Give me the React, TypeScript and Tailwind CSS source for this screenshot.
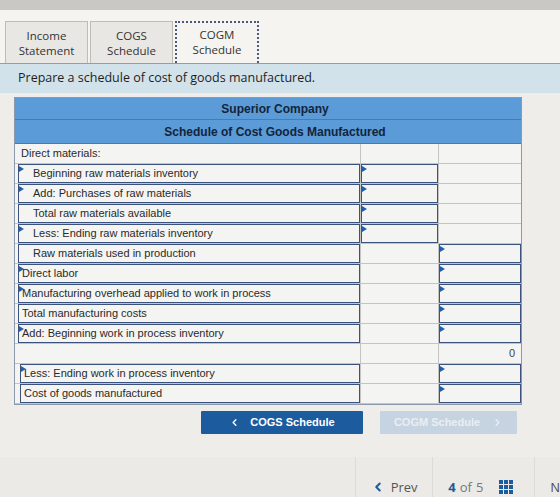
import React from "react";
import { ChevronLeft, ChevronRight } from "lucide-react";

type Row = {
  label: string;
  indent?: boolean;
  labelInput?: boolean;
  marker?: boolean;
  col2?: boolean;
  col3?: boolean;
  value?: string;
  shift?: boolean;
};

const rows: Row[] = [
  { label: "Direct materials:" },
  { label: "Beginning raw materials inventory", indent: true, labelInput: true, marker: true, col2: true },
  { label: "Add: Purchases of raw materials", indent: true, labelInput: true, marker: true, col2: true },
  { label: "Total raw materials available", indent: true, labelInput: true, col2: true },
  { label: "Less: Ending raw materials inventory", indent: true, labelInput: true, marker: true, col2: true },
  { label: "Raw materials used in production", indent: true, labelInput: true, col3: true },
  { label: "Direct labor", labelInput: true, marker: true, col3: true },
  { label: "Manufacturing overhead applied to work in process", labelInput: true, marker: true, col3: true },
  { label: "Total manufacturing costs", labelInput: true, col3: true },
  { label: "Add: Beginning work in process inventory", labelInput: true, marker: true, col3: true },
  { label: "", value: "0" },
  { label: "Less: Ending work in process inventory", labelInput: true, marker: true, col3: true, shift: true },
  { label: "Cost of goods manufactured", labelInput: true, col3: true, shift: true },
];

// small flag marking an editable cell
function Marker() {
  return (
    <span className="absolute left-0 top-[1px] h-0 w-0 border-y-[3px] border-l-[5px] border-y-transparent border-l-[#1f5fb0]" />
  );
}

function InputBox({ marker, children }: { marker?: boolean; children?: React.ReactNode }) {
  return (
    <div className="relative h-full w-full border-[1.5px] border-[#3a527c] bg-[#f4f4f2]">
      {marker && <Marker />}
      {children}
    </div>
  );
}

function TableRow({ row }: { row: Row }) {
  const pad = row.indent ? "pl-[14px]" : "pl-[3px]";
  return (
    <div className="grid h-5 grid-cols-[346px_78px_82px] border-b border-[#c4c4c2]">
      <div className={`h-full border-r border-[#c4c4c2] ${row.shift ? "pl-[5px]" : "pl-[3px]"}`}>
        {row.labelInput ? (
          <InputBox marker={row.marker}>
            <div className={`flex h-full items-center ${pad} text-[11px] text-[#2a2a2a]`}>{row.label}</div>
          </InputBox>
        ) : (
          <div className="flex h-full items-center pl-[3px] text-[11px] text-[#2a2a2a]">{row.label}</div>
        )}
      </div>
      <div className="h-full border-r border-[#c4c4c2]">
        {row.col2 && <InputBox marker />}
      </div>
      <div className="h-full">
        {row.col3 && <InputBox marker />}
        {row.value && (
          <div className="flex h-full items-center justify-end pr-[6px] text-[11px] text-[#444]">{row.value}</div>
        )}
      </div>
    </div>
  );
}

function Tab({ top, bottom, active }: { top: string; bottom: string; active?: boolean }) {
  return (
    <div
      className={
        active
          ? "flex h-[42px] w-[84px] flex-col items-center justify-center border-2 border-dotted border-b-0 border-[#4a5a7a] bg-[#f5f4f0] pb-[3px] text-[11.5px] leading-[15px] text-[#333]"
          : "flex h-[42px] w-[83px] flex-col items-center justify-center border border-b-0 border-[#bcbcb9] bg-[#e8e7e3] text-[11.5px] leading-[15px] text-[#333]"
      }
    >
      <span className="block leading-[15px]">{top}</span>
      <span className="block leading-[15px]">{bottom}</span>
    </div>
  );
}

export default function App() {
  return (
    <div
      className="flex h-[497px] w-[560px] flex-col overflow-hidden bg-[#eeede9]"
      style={{ fontFamily: '"Liberation Sans", Arial, sans-serif' }}
    >
      <div className="h-[10px] bg-[#c9c8c4]" />
      <div className="flex h-[53px] items-end gap-[2px] bg-[#f5f4f0] pl-[5px]" style={{ fontFamily: '"Open Sans", sans-serif' }}>
        <Tab top="Income" bottom="Statement" />
        <Tab top="COGS" bottom="Schedule" />
        <Tab top="COGM" bottom="Schedule" active />
      </div>
      <div
        className="flex h-[30px] items-center border-t border-[#9c9c9a] bg-[#d2e2eb] pl-[18px] text-[12.5px] text-[#1e1e1e]"
        style={{ fontFamily: '"Open Sans", sans-serif' }}
      >
        Prepare a schedule of cost of goods manufactured.
      </div>

      <div className="ml-[14px] mt-[4px] w-[508px] border border-[#8a9aaa] bg-[#f4f4f2]">
        <div className="flex h-[22px] items-center justify-center border-b border-[#4a7ab0] bg-[#5b9bd7] pl-[14px] text-[12px] font-bold text-[#14243a]">
          Superior Company
        </div>
        <div className="flex h-[24px] items-center justify-center border-b border-[#4a7ab0] bg-[#5b9bd7] pl-[14px] text-[12px] font-bold text-[#14243a]">
          Schedule of Cost Goods Manufactured
        </div>
        {rows.map((r, i) => (
          <TableRow key={i} row={r} />
        ))}
      </div>

      <div className="mt-[6px] flex gap-[17px] pl-[201px]">
        <button className="flex h-[23px] w-[162px] items-center justify-center gap-[10px] rounded-[1px] bg-[#1c5c9e] text-[11px] font-bold text-white">
          <ChevronLeft size={11} strokeWidth={3} />
          <span>COGS Schedule</span>
        </button>
        <button className="flex h-[23px] w-[137px] items-center justify-center gap-[12px] rounded-[1px] bg-[#c6d4e2] text-[11px] font-bold text-[#e9eef4]">
          <span>COGM Schedule</span>
          <ChevronRight size={11} strokeWidth={3} />
        </button>
      </div>

      <div className="mt-auto flex h-[40px] bg-[#eceae6]">
        <div className="w-[358px]" />
        <div className="flex w-[78px] items-end justify-center gap-[6px] border-l border-[#dcdbd6] text-[13px] text-[#555]" style={{ fontFamily: '"Open Sans", sans-serif' }}>
          <ChevronLeft size={14} strokeWidth={3.5} className="mb-[3px] text-[#1c5c9e]" />
          <span>Prev</span>
        </div>
        <div className="flex w-[102px] items-end gap-[4px] border-l border-[#dcdbd6] pl-[15px] text-[13px] text-[#777]" style={{ fontFamily: '"Open Sans", sans-serif' }}>
          <span className="font-bold text-[#1c5c9e]">4</span>
          <span>of</span>
          <span>5</span>
          <span className="mb-[3px] ml-[12px] grid grid-cols-3 gap-[1px]">
            {Array.from({ length: 9 }).map((_, k) => (
              <span key={k} className="h-[4px] w-[4px] bg-[#1c5c9e]" />
            ))}
          </span>
        </div>
        <div className="flex items-end border-l border-[#dcdbd6] pl-[16px] text-[13px] text-[#555]">N</div>
      </div>
    </div>
  );
}
